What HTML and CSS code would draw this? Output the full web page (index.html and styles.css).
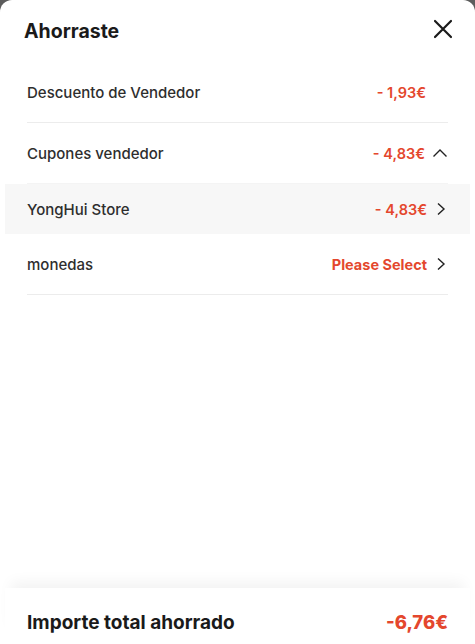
FILE: index.html
```html
<!DOCTYPE html>
<html lang="es">

<head>
    <meta charset="UTF-8">
    <meta name="viewport" content="width=device-width, initial-scale=1.0">
    <title>Ahorraste</title>
    <link rel="stylesheet" href="styles.css">
</head>

<body>
    <div class="sheet">
        <header class="sheet-header">
            <h1>Ahorraste</h1>
            <button class="close-btn" aria-label="Cerrar">
                <svg width="20" height="20" viewBox="0 0 20 20">
                    <path d="M2 2 L18 18 M18 2 L2 18" stroke="#1a1a1a" stroke-width="2.2" stroke-linecap="round" fill="none"/>
                </svg>
            </button>
        </header>

        <div class="list">
            <div class="row">
                <div class="row-inner">
                    <span class="label">Descuento de Vendedor</span>
                    <span class="value no-arrow">- 1,93€</span>
                </div>
            </div>

            <div class="row">
                <div class="row-inner light">
                    <span class="label">Cupones vendedor</span>
                    <span class="value">- 4,83€
                        <svg class="arrow" width="16" height="14" viewBox="0 0 16 14">
                            <path d="M1.5 10.5 L8 4 L14.5 10.5" stroke="#222" stroke-width="1.4" fill="none"/>
                        </svg>
                    </span>
                </div>
            </div>

            <div class="row sub">
                <div class="row-inner no-line">
                    <span class="label">YongHui Store</span>
                    <span class="value">- 4,83€
                        <svg class="arrow" width="14" height="14" viewBox="0 0 14 14">
                            <path d="M4 1.5 L10 7 L4 12.5" stroke="#222" stroke-width="1.4" fill="none"/>
                        </svg>
                    </span>
                </div>
            </div>

            <div class="row">
                <div class="row-inner">
                    <span class="label">monedas</span>
                    <span class="value strong">Please Select
                        <svg class="arrow" width="14" height="14" viewBox="0 0 14 14">
                            <path d="M4 1.5 L10 7 L4 12.5" stroke="#222" stroke-width="1.4" fill="none"/>
                        </svg>
                    </span>
                </div>
            </div>
        </div>

        <footer class="total">
            <span class="total-label">Importe total ahorrado</span>
            <span class="total-value">-6,76€</span>
        </footer>
    </div>
</body>

</html>
```

FILE: styles.css
```css
body {
    margin: 0;
    font-family: "Inter", "Noto Sans", sans-serif;
    background-color: #5c5c5c;
    color: #222;
}

.sheet {
    height: 644px;
    background-color: #fff;
    border-radius: 12px 12px 0 0;
    display: flex;
    flex-direction: column;
    overflow: hidden;
}

.sheet-header {
    display: flex;
    justify-content: space-between;
    align-items: center;
    padding: 0 22px 0 24px;
    height: 62px;
}

.sheet-header h1 {
    margin: 0;
    font-size: 19.5px;
    font-weight: 700;
    color: #1a1a1a;
}

.close-btn {
    border: none;
    background: none;
    padding: 0;
    width: 20px;
    height: 20px;
    margin-bottom: 4px;
    cursor: pointer;
}

.list {
    padding: 0 5px;
}

.row {
    padding: 0 22px;
}

.row.sub {
    background-color: #f7f7f7;
}

.row-inner {
    display: flex;
    justify-content: space-between;
    align-items: center;
    height: 60px;
    border-bottom: 1px solid #ececec;
}

.row-inner.light {
    border-bottom-color: #f4f4f4;
}

.row-inner.no-line {
    height: 50px;
    border-bottom: none;
}

.label {
    font-size: 15px;
    font-weight: 500;
    color: #2e2e2e;
}

.value {
    display: flex;
    align-items: center;
    gap: 5px;
    font-size: 14.5px;
    font-weight: 600;
    color: #e4472d;
}

.value.no-arrow {
    margin-right: 22px;
}

.value.strong {
    font-weight: 700;
}

.arrow {
    margin-left: 2px;
}

.total {
    margin: auto 5px 0;
    display: flex;
    justify-content: space-between;
    align-items: flex-start;
    padding: 23px 22px 0;
    height: 33px;
    background-color: #fff;
    box-shadow: 0 -12px 14px -6px rgba(0, 0, 0, 0.05);
}

.total-label {
    font-size: 19px;
    font-weight: 700;
    color: #1a1a1a;
}

.total-value {
    font-size: 18.5px;
    font-weight: 800;
    color: #e4472d;
}
```
